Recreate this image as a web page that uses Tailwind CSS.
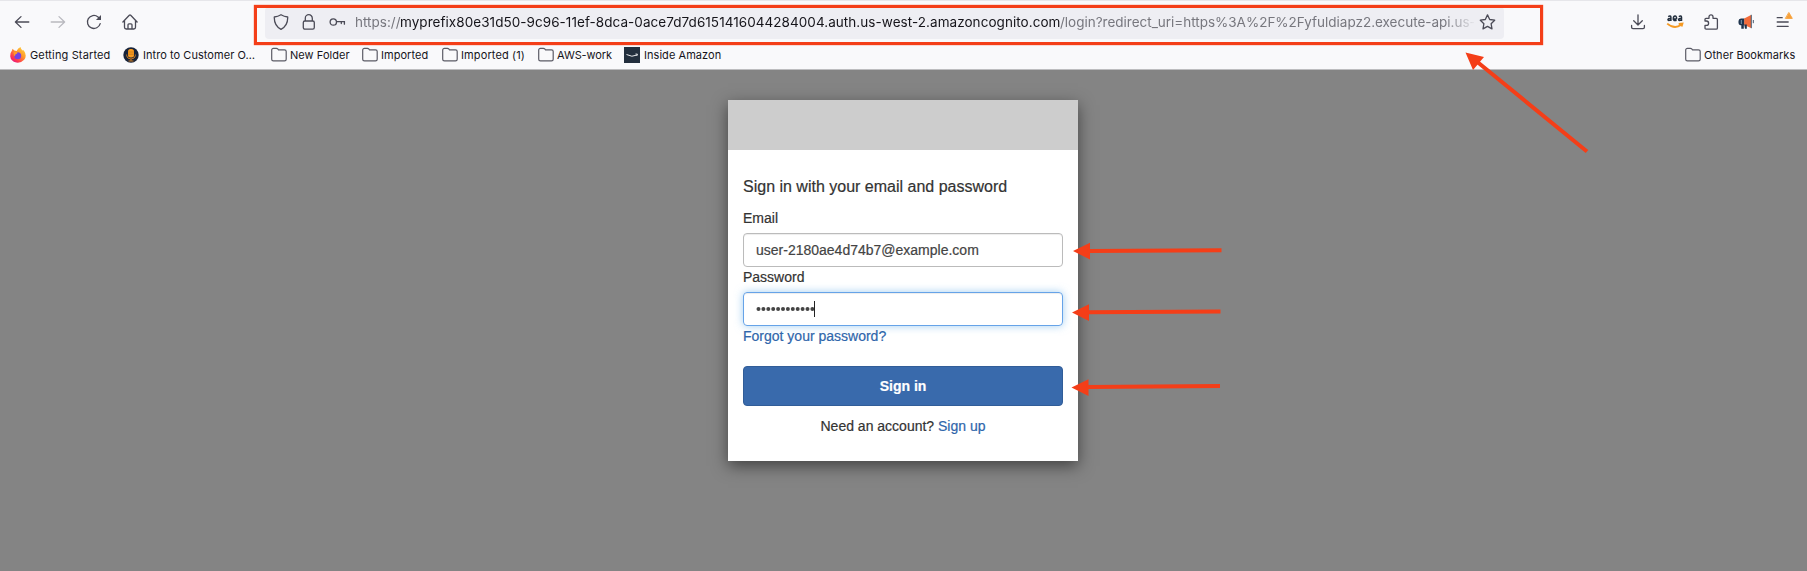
<!DOCTYPE html>
<html lang="en">
<head>
<meta charset="utf-8">
<title>Sign in</title>
<script src="https://cdn.jsdelivr.net/npm/@tailwindcss/browser@4"></script>
</head>
<body class="relative flex h-[571px] w-[1807px] flex-col overflow-hidden bg-[#848484] font-['Liberation_Sans',sans-serif] text-[#333]">
<svg class="hidden"><symbol id="folder" viewBox="0 0 16 16"><path d="M.7 12.2V3.1A1.7 1.7 0 0 1 2.4 1.4h3c.7 0 1.1.3 1.6.8l.5.6h6A1.7 1.7 0 0 1 15.2 4.5v7.7a1.7 1.7 0 0 1-1.7 1.7H2.4A1.7 1.7 0 0 1 .7 12.2z" fill="none" stroke="#5b5b66" stroke-width="1.2"/></symbol></svg>

<header class="h-[70px] shrink-0 border-t border-b border-t-[#e6e6ea] border-b-[#bdbdbf] bg-[#f9f9fb] font-['Inter',sans-serif]">
  <div class="flex h-[41px] items-center pl-1 text-[#4b4b57]">
    <div class="grid w-9 place-items-center"><svg width="16" height="16" viewBox="0 0 16 16" fill="none" stroke="currentColor" stroke-width="1.3" stroke-linecap="round" stroke-linejoin="round"><path d="M14.8 8H1.6M7 2.6 1.4 8 7 13.4"/></svg></div>
    <div class="grid w-9 place-items-center text-[#b9b9bf]"><svg width="16" height="16" viewBox="0 0 16 16" fill="none" stroke="currentColor" stroke-width="1.3" stroke-linecap="round" stroke-linejoin="round"><path d="M1.2 8h13.2M9 2.6 14.6 8 9 13.4"/></svg></div>
    <div class="grid w-9 place-items-center"><svg width="16" height="16" viewBox="0 0 16 16" fill="none" stroke="currentColor" stroke-width="1.3" stroke-linecap="round"><path d="M14.2 9.6A6.5 6.5 0 1 1 12 2.9l1.6 1.4"/><path d="M15 .9V6H9.9z" fill="currentColor" stroke="none"/></svg></div>
    <div class="grid w-9 place-items-center"><svg width="16" height="16" viewBox="0 0 16 16" fill="none" stroke="currentColor" stroke-width="1.3" stroke-linecap="round" stroke-linejoin="round"><path d="M.9 8 7.3 1.3q.7-.6 1.4 0L15.1 8M2.5 6.8v6.5q0 1.700 1.700 1.700h7.600q1.700 0 1.700-1.700V6.800M6 14.800v-4q0-1 1-1h2q1 0 1 1v4"/></svg></div>
    <div class="ml-[117px] mt-0.5 flex h-8 w-[1239px] items-center rounded bg-[#eeeef3] pb-0.5">
      <svg class="ml-2" width="16" height="16" viewBox="0 0 16 16" fill="none" stroke="currentColor" stroke-width="1.3" stroke-linejoin="round"><path d="M8 .7c2 1.2 4.200 2 6.700 2.300C14.900 8.700 12.600 12.900 8 15.300 3.400 12.900 1.100 8.700 1.300 3 3.800 2.700 6 1.900 8 .7z"/></svg>
      <svg class="ml-3" width="16" height="16" viewBox="0 0 16 16" fill="none" stroke="currentColor" stroke-width="1.3"><rect x="2.300" y="7" width="11" height="8.200" rx="1.600"/><path d="M4.300 7V4.200a3.500 3.500 0 0 1 7 0V7"/></svg>
      <svg class="ml-3" width="17" height="16" viewBox="0 0 17 16" fill="none" stroke="currentColor" stroke-width="1.3" stroke-linecap="round"><circle cx="4.300" cy="8" r="3.200"/><path d="M7.600 7.600h7.800v2.600M12.300 7.600v2"/></svg>
      <div class="ml-[9px] flex w-[1119px] pt-0.5 whitespace-nowrap text-[13.5px] text-[#77777e] [mask-image:linear-gradient(to_right,black_1090px,transparent_1121px)]"><span class="w-[45px] shrink-0">https://</span><span class="w-[660px] shrink-0 tracking-[0.055px] text-[#15141a]">myprefix80e31d50-9c96-11ef-8dca-0ace7d7d6151416044284004.auth.us-west-2.amazoncognito.com</span><span class="shrink-0 tracking-[-0.01px]">/login?redirect_uri=https%3A%2F%2Fyfuldiapz2.execute-api.us-</span></div>
      <svg class="ml-[5px]" width="17" height="16" viewBox="0 0 17 16" fill="none" stroke="currentColor" stroke-width="1.3" stroke-linejoin="round"><path d="m8.500.9 2.200 4.600 5 .7-3.600 3.500.9 5.200-4.500-2.500L4 14.900l.9-5.200L1.300 6.200l5-.7z"/></svg>
    </div>
    <div class="ml-[116px] flex items-center">
      <div class="grid w-9 place-items-center"><svg width="16" height="16" viewBox="0 0 16 16" fill="none" stroke="currentColor" stroke-width="1.300" stroke-linecap="round" stroke-linejoin="round"><path d="M8 .8v10M3.700 6.800 8 11l4.300-4.200M1.600 11.500v1.800q0 1.400 1.400 1.400h10q1.400 0 1.400-1.400v-1.800"/></svg></div>
      <div class="grid w-[37px] place-items-center"><svg width="18" height="16" viewBox="0 0 18 16" fill="none" stroke="#232f3e" stroke-width="1.500"><path d="M2.200 2.600q2.500-1.300 2.700.6v3.900M4.700 4.500q-2.700-.2-2.800 1.200.3 1.500 2.800.2M10.600 4.900H7.300Q7.300 2.200 9 2.100t1.600 2.800M7.300 4.900q.2 2.400 3.300 1.400M12.800 2.600q2.500-1.300 2.700.6v3.900M15.300 4.500q-2.700-.2-2.800 1.200.3 1.500 2.800.2"/><path d="M1.200 9.600q7.300 6.200 14 1.200M12.700 10l3.800-.4-.9 3" stroke="#f59a23" stroke-width="1.800"/></svg></div>
      <div class="grid w-9 place-items-center"><svg width="16" height="16" viewBox="0 0 16 16" fill="none" stroke="currentColor" stroke-width="1.300" stroke-linejoin="round"><path d="M2 7V5.300q0-1 1-1h3V2.800a2 2 0 0 1 4 0v1.500h3.300q1.100 0 1.100 1.100v8.500q0 1.300-1.300 1.300H3.200Q2 15.200 2 14v-2.600h1.400a2.200 2.200 0 0 0 0-4.400z"/></svg></div>
      <div class="grid w-[34px] place-items-center"><svg width="16" height="16" viewBox="0 0 16 16"><path d="M6.500 4.500H3A2.600 2.600 0 0 0 .5 7v2Q.5 11 2.500 11.300h.8v3.500h2.500v-3.500h.7z" fill="#1f344d"/><path d="M3.300 6v4" stroke="#7d9bb2" stroke-width="1"/><path d="M6.200 4.500 13 1v13l-6.800-3z" fill="#f26b3a"/><path d="M6.200 10.500h2.600v4.200H7z" fill="#1f344d"/><path d="M13.300 .8v13.400M15.300 6v3.200" stroke="#31445b" stroke-width=".9"/></svg></div>
      <div class="grid w-[41px] place-items-center"><svg width="18" height="20" viewBox="0 0 18 20" fill="none" stroke="currentColor" stroke-width="1.300" stroke-linecap="round"><path d="M2.200 5.700h5M2.200 10h11M2.200 14.300h11"/><path d="m14 .8 3.300 5.600h-6.600z" fill="#f7a13a" stroke="#f7a13a" stroke-width=".9" stroke-linejoin="round"/></svg></div>
    </div>
  </div>
  <nav class="flex h-[26px] items-center pl-[10px] text-[11px] tracking-[0.05px] text-[#15141a] whitespace-nowrap">
    <svg width="16" height="16" viewBox="0 0 16 16"><defs><linearGradient id="fx" x1="1" y1="0" x2=".2" y2="1"><stop stop-color="#ffe044"/><stop offset=".45" stop-color="#ff9a2a"/><stop offset=".8" stop-color="#ff3750"/><stop offset="1" stop-color="#e31587"/></linearGradient></defs><path d="M10.500 0q.3 2 2.200 3.500l1-.2q3.800 5.500.5 9.500-3.300 3.500-8 2.700Q.8 14.300.2 9.200.2 5.500 2 3.500l.5-1.700L4.400 3.600l2.200.3Q8 1 10.500 0z" fill="url(#fx)"/><circle cx="7.700" cy="8.800" r="3.500" fill="#7542e5"/><path d="M3.500 5.500q2-1.500 4.200.1-.4 1.500-2.200 1.600 0 1.300-1.200 2z" fill="#ff9a2a"/></svg>
    <span class="ml-1 w-[90px] tracking-[0.14px]">Getting Started</span>
    <svg class="ml-[3px]" width="16" height="16" viewBox="0 0 16 16"><circle cx="8" cy="8" r="7.700" fill="#17233a"/><rect x="5" y="2" width="6" height="8.500" rx="2.500" fill="#f79a1f"/><path d="M5 5h6M5 7.200h6" stroke="#b86e18" stroke-width=".6"/><path d="M3.700 7.500v1.300q.4 3 4.300 3.200 3.900-.2 4.300-3.200V7.500M8 12v2M5.500 14h5" fill="none" stroke="#c87a22"/></svg>
    <span class="ml-1 w-[128px]">Intro to Customer O…</span>
    <svg width="16" height="16"><use href="#folder"/></svg>
    <span class="ml-[3px] w-[72px]">New Folder</span>
    <svg width="16" height="16"><use href="#folder"/></svg>
    <span class="ml-[3px] w-[61px]">Imported</span>
    <svg width="16" height="16"><use href="#folder"/></svg>
    <span class="ml-[3px] w-[77px] tracking-[0.12px]">Imported (1)</span>
    <svg width="16" height="16"><use href="#folder"/></svg>
    <span class="ml-[3px] w-[67px] tracking-[-0.08px]">AWS-work</span>
    <svg width="16" height="16" viewBox="0 0 16 16"><path fill="#232f3e" d="M0 0h16v16H0z"/><path d="M2.500 7.500q5.500 3.200 10.500.5M11.500 7l2 .2-.7 1.700" fill="none" stroke="#e8eaed" stroke-width="1"/></svg>
    <span class="ml-1">Inside Amazon</span>
    <svg class="ml-auto" width="16" height="16"><use href="#folder"/></svg>
    <span class="ml-[3px] mr-[12px] w-[91px]">Other Bookmarks</span>
  </nav>
</header>

<main class="flex flex-1 items-start justify-center pt-[30px] pr-px">
  <section class="h-[361px] w-[350px] bg-white shadow-[0_5px_15px_rgba(0,0,0,0.5)]">
    <div class="h-[50px] bg-[#cdcdcd]"></div>
    <form class="flex flex-col px-[15px] pt-[26px] text-sm leading-5 [-webkit-text-stroke:0.2px]">
      <h1 class="text-base leading-[22px]">Sign in with your email and password</h1>
      <label class="mt-[10px]">Email</label>
      <div class="mt-[5px] flex h-[34px] items-center rounded border border-[#bbb] px-3 text-[#444] shadow-[inset_0_1px_1px_rgba(0,0,0,0.075)]">user-2180ae4d74b7@example.com</div>
      <label>Password</label>
      <div class="mt-[5px] flex h-[34px] items-center rounded border border-[#66a3e8] px-3 shadow-[inset_0_1px_1px_rgba(0,0,0,0.075),0_0_8px_rgba(102,175,233,0.6)]">
        <svg width="59" height="6" viewBox="0 0 59 6" fill="#444"><circle cx="2.500" cy="3" r="2"/><circle cx="7.400" cy="3" r="2"/><circle cx="12.300" cy="3" r="2"/><circle cx="17.200" cy="3" r="2"/><circle cx="22.100" cy="3" r="2"/><circle cx="27" cy="3" r="2"/><circle cx="31.900" cy="3" r="2"/><circle cx="36.800" cy="3" r="2"/><circle cx="41.700" cy="3" r="2"/><circle cx="46.600" cy="3" r="2"/><circle cx="51.500" cy="3" r="2"/><circle cx="56.400" cy="3" r="2"/></svg>
        <span class="-ml-px h-4 w-px bg-[#222]"></span>
      </div>
      <a class="text-[#2f66ab]">Forgot your password?</a>
      <div class="mt-5 grid h-10 place-items-center rounded-[4px] border border-[#315d98] bg-[#396aac] font-bold text-white">Sign in</div>
      <p class="mt-[10px] text-center">Need an account? <a class="text-[#2f66ab]">Sign up</a></p>
    </form>
  </section>
</main>

<div class="absolute left-[254px] top-[5px] h-10 w-[1289px] border-[3.5px] border-[#f43e18] shadow-[0_0_1px_#f43e18]"></div>
<svg class="absolute inset-0" width="1807" height="571" fill="#f43e18" stroke="#f43e18">
  <g stroke="none"><path d="m1465.500 52.500 18.500 4.500-11 13zM1073 251l17-8.200v16.700zM1072 312.500l17-8.200V321zM1071.500 387.500l17-8.200V396z"/></g>
  <path fill="none" stroke-width="4" d="m1478 62.500 109 89M1088 251l133.500-.7M1087 312.200l133.500-.7M1087 387l133-.9"/>
</svg>
</body>
</html>
